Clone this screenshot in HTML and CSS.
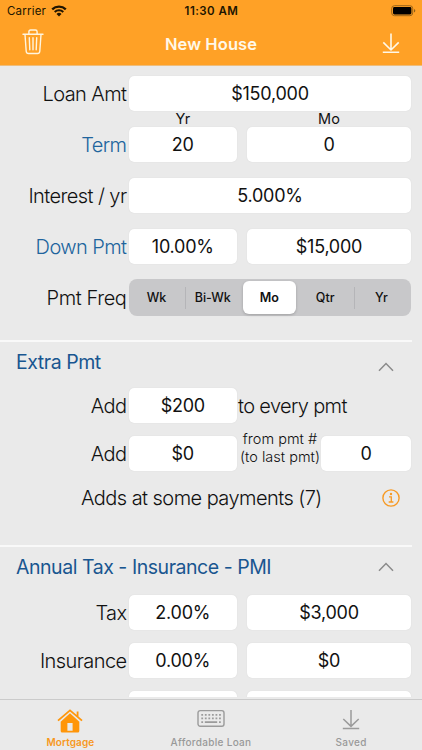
FILE: index.html
```html
<!doctype html>
<html lang="en">
<head>
    <meta charset="UTF-8">
    <meta name="viewport" content="width=device-width, initial-scale=1.0">
    <title>New House</title>
    <link rel="stylesheet" href="styles.css">
</head>
<body>
    <header class="top">
        <div class="status">
            <div class="carrier">
                <span>Carrier</span>
                <svg width="16" height="12" viewBox="0 0 16 12">
                    <path d="M1.2 4.4a9.8 9.8 0 0 1 13.6 0" fill="none" stroke="#211500" stroke-width="2.3"/>
                    <path d="M3.7 7a6.2 6.2 0 0 1 8.6 0" fill="none" stroke="#211500" stroke-width="2"/>
                    <path d="M5.5 8.9a3.7 3.7 0 0 1 5 0L8 11.4z" fill="#211500"/>
                </svg>
            </div>
            <span class="time">11:30 AM</span>
            <svg class="battery" width="25" height="12" viewBox="0 0 25 12">
                <rect x=".7" y=".7" width="21" height="10" rx="2.8" fill="none" stroke="#9b6519"/>
                <rect x="2" y="2" width="18.4" height="7.4" rx="1.4" fill="#000"/>
                <path d="M23 4v3.6q1.3-.5 1.3-1.8T23 4z" fill="#8d5c17"/>
            </svg>
        </div>
        <nav class="navbar">
            <svg class="trash" width="22" height="26" viewBox="0 0 22 26" fill="none" stroke="#fff5df" stroke-width="1.4" stroke-linecap="round">
                <path d="M1 5.3h20M6.9 5V2.7q0-1.7 1.7-1.7h4.8q1.7 0 1.7 1.7V5M3 5.5l1.2 16.8q.2 2.2 2.3 2.2h9q2.1 0 2.3-2.2L19 5.5M7.3 8.8l.5 12M11 8.8v12M14.7 8.8l-.5 12"/>
            </svg>
            <h1>New House</h1>
            <svg class="save" width="18" height="21" viewBox="0 0 18 21" fill="none" stroke="#fff8e8" stroke-width="1.6">
                <path d="M9 .5v16.8M1.3 9.4L9 17l7.7-7.6M.8 19.2h16.4"/>
            </svg>
        </nav>
    </header>

    <main class="content">
        <section class="loan">
            <div class="row">
                <label>Loan Amt</label>
                <div class="field wide">$150,000</div>
            </div>
            <div class="units"><span class="yr">Yr</span><span class="mo">Mo</span></div>
            <div class="row">
                <label class="link">Term</label>
                <div class="field">20</div>
                <div class="field">0</div>
            </div>
            <div class="row">
                <label>Interest / yr</label>
                <div class="field wide">5.000%</div>
            </div>
            <div class="row">
                <label class="link">Down Pmt</label>
                <div class="field">10.00%</div>
                <div class="field">$15,000</div>
            </div>
            <div class="row freq">
                <label>Pmt Freq</label>
                <div class="segment wide">
                    <span>Wk</span>
                    <span class="line">Bi-Wk</span>
                    <span class="active">Mo</span>
                    <span>Qtr</span>
                    <span class="line">Yr</span>
                </div>
            </div>
        </section>

        <section class="extra">
            <div class="title">
                <h2>Extra Pmt</h2>
                <svg class="up" width="16" height="10" viewBox="0 0 16 10"><path d="M1 8.8L8 1.5l7 7.3"/></svg>
            </div>
            <div class="row">
                <label>Add</label>
                <div class="field">$200</div>
                <div class="after">to every pmt</div>
            </div>
            <div class="row">
                <label>Add</label>
                <div class="field">$0</div>
                <div class="from">
                    <p>from pmt #<br>(to last pmt)</p>
                    <div class="field">0</div>
                </div>
            </div>
            <div class="some">
                <span>Adds at some payments (7)</span>
                <svg width="18" height="18" viewBox="0 0 18 18" fill="none" stroke="#f79a24" stroke-width="1.4">
                    <circle cx="9" cy="9" r="8.1"/>
                    <path d="M7 7.8h2.3v5.1M6.7 13h4.7" stroke-width="1.3"/>
                    <circle cx="9" cy="5" r="1.2" fill="#f79a24" stroke="none"/>
                </svg>
            </div>
        </section>

        <section class="tax">
            <div class="title">
                <h2>Annual Tax - Insurance - PMI</h2>
                <svg class="up" width="16" height="10" viewBox="0 0 16 10"><path d="M1 8.8L8 1.5l7 7.3"/></svg>
            </div>
            <div class="row">
                <label>Tax</label>
                <div class="field">2.00%</div>
                <div class="field">$3,000</div>
            </div>
            <div class="row">
                <label>Insurance</label>
                <div class="field">0.00%</div>
                <div class="field">$0</div>
            </div>
            <div class="row">
                <label></label>
                <div class="field"></div>
                <div class="field"></div>
            </div>
        </section>
    </main>

    <footer class="tabs">
        <a class="tab on">
            <svg width="26" height="25" viewBox="0 0 26 25">
                <path d="M13 4.2l9.3 8.5V22q0 1.5-1.5 1.5H5.2q-1.5 0-1.5-1.5v-9.3zM10.4 14v7.7h5.2V14z" fill="#ff960a" fill-rule="evenodd"/>
                <path d="M1 11.6L13 1.4l12 10.2M20.6 7.4V2.6" fill="none" stroke="#ff960a" stroke-width="1.8"/>
            </svg>
            <span>Mortgage</span>
        </a>
        <a class="tab">
            <svg width="28" height="25" viewBox="0 0 28 25" fill="none" stroke="#9b9b9b">
                <rect x="1" y="1.6" width="26" height="15.6" rx="2.2" stroke-width="1.4"/>
                <path d="M4.3 5.8h20M4.3 9.4h20" stroke-width="1.7" stroke-dasharray="1.8 1.75"/>
                <path d="M4.3 13.2h1.8M7.8 13.2h12.4M22 13.2h1.8" stroke-width="1.7"/>
            </svg>
            <span>Affordable Loan</span>
        </a>
        <a class="tab saved">
            <svg width="18" height="25" viewBox="0 0 18 25" fill="none" stroke="#9b9b9b" stroke-width="1.5">
                <path d="M9 1v16.6M1.3 10L9 17.4l7.7-7.4M.8 19.5h16.4"/>
            </svg>
            <span>Saved</span>
        </a>
    </footer>
</body>
</html>
```
FILE: styles.css
```css
*{
    margin: 0;
    padding: 0;
    box-sizing: border-box;
}
body{
    display: flex;
    flex-direction: column;
    height: 750px;
    background: #eaeaea;
    color: #111;
    font-family: Inter, "Liberation Sans", sans-serif;
    overflow: hidden;
}
svg{
    display: block;
    flex: none;
}

/* header */
.top{
    flex: none;
    height: 66px;
    background: #ffa126;
    border-bottom: 1px solid #eebd7c;
}
.status{
    display: grid;
    grid-template-columns: 1fr auto 1fr;
    align-items: center;
    height: 22px;
    padding: 0 6px 0 7px;
    font-size: 11.5px;
    color: #211500;
}
.carrier{
    display: flex;
    gap: 5px;
    letter-spacing: .2px;
}
.carrier svg{
    margin-top: 1px;
}
.time{
    font-weight: 600;
    letter-spacing: .45px;
}
.battery{
    justify-self: end;
}
.navbar{
    display: flex;
    justify-content: space-between;
    align-items: center;
    height: 43px;
    padding: 0 22px;
}
.navbar h1{
    margin-right: 4px;
    font-size: 16.5px;
    font-weight: 600;
    letter-spacing: .1px;
    color: #fff8e8;
}
.trash{
    margin-top: -3px;
}

/* form */
.content{
    height: 631px;
    overflow: hidden;
}
.loan{
    height: 274px;
    padding-top: 10px;
}
.row{
    display: grid;
    grid-template-columns: 127px 107.5px 10.5px 164px;
    align-items: center;
    height: 35px;
    margin-bottom: 16px;
    padding-left: 2px;
}
.row label{
    padding-right: 2.5px;
    text-align: right;
    font-size: 20px;
    font-weight: 300;
    letter-spacing: -.58px;
    white-space: nowrap;
}
.row > :nth-child(3){
    grid-column: 4;
}
.row .wide{
    grid-column: 2 / 5;
}
.field{
    height: 35px;
    border-radius: 5px;
    background: #fff;
    box-shadow: 0 0 1px #ccc;
    text-align: center;
    line-height: 35px;
    font-size: 18px;
    letter-spacing: -.25px;
}
.row .link{
    color: #20649d;
}
.units{
    display: grid;
    grid-template-columns: 107.5px 10.5px 164px;
    height: 16px;
    margin: -16px 0 0 129px;
    text-align: center;
    font-size: 14.5px;
    line-height: 16px;
}
.mo{
    grid-column: 3;
}
.freq{
    margin-top: -1px;
}
.freq label{
    letter-spacing: -.4px;
}
.segment{
    display: grid;
    grid-template-columns: repeat(5, 1fr);
    height: 37px;
    padding: 2px 1px 2px 0;
    border-radius: 8px;
    background: #c8c8ca;
    text-align: center;
    line-height: 33px;
    font-size: 12.5px;
    font-weight: 500;
}
.segment span{
    padding-right: 1px;
}
.segment .active{
    margin: 0 1.5px 0 2px;
    border-radius: 6px;
    background: #fff;
    font-weight: 600;
    box-shadow: 0 1px 3px rgba(0,0,0,.2);
}
.segment .line{
    background: linear-gradient(#b5b5b8, #b5b5b8) 0 50% / 1px 22px no-repeat;
}
.extra,
.tax{
    margin-right: 10px;
    border-top: 2px solid #f9f9f9;
}
.extra{
    height: 205px;
}
.title{
    display: flex;
    justify-content: space-between;
    align-items: center;
    height: 46px;
    padding: 0 18px 6px 16px;
}
.title h2{
    font-size: 19.5px;
    font-weight: 400;
    letter-spacing: -.46px;
    color: #195690;
}
.up path{
    fill: none;
    stroke: #8b8b8b;
    stroke-width: 1.5;
}
.extra .up{
    margin-top: 10px;
}
.extra .row,
.tax .row{
    margin-bottom: 13px;
}
.after{
    margin-left: -9px;
    font-size: 20px;
    font-weight: 300;
    letter-spacing: -.65px;
    white-space: nowrap;
}
.from{
    display: flex;
    justify-content: space-between;
    align-items: center;
    margin-left: -8px;
}
.from p{
    margin-top: -11px;
    width: 82px;
    text-align: center;
    font-size: 14.5px;
    line-height: 18px;
    font-weight: 300;
    white-space: nowrap;
}
.from .field{
    width: 90px;
}
.some{
    display: flex;
    justify-content: space-between;
    align-items: center;
    height: 30px;
    margin-top: -1px;
    padding: 0 12px 0 81px;
    font-size: 20px;
    font-weight: 300;
    letter-spacing: -.55px;
}
.tax .title{
    height: 48px;
    padding-bottom: 8px;
}

/* tab bar */
.tabs{
    display: grid;
    grid-template-columns: repeat(3, 1fr);
    height: 51px;
    margin-top: 2px;
    border-top: 1px solid #cbcbcb;
    padding-top: 9px;
}
.tab{
    display: flex;
    flex-direction: column;
    align-items: center;
    color: #999;
    font-size: 10px;
    font-weight: 500;
    letter-spacing: .3px;
}
.tab span{
    margin-top: 1px;
    line-height: 14px;
}
.tab.on{
    color: #f7981d;
    font-weight: 600;
    letter-spacing: .1px;
}
.saved{
    padding-right: 1px;
}
```
